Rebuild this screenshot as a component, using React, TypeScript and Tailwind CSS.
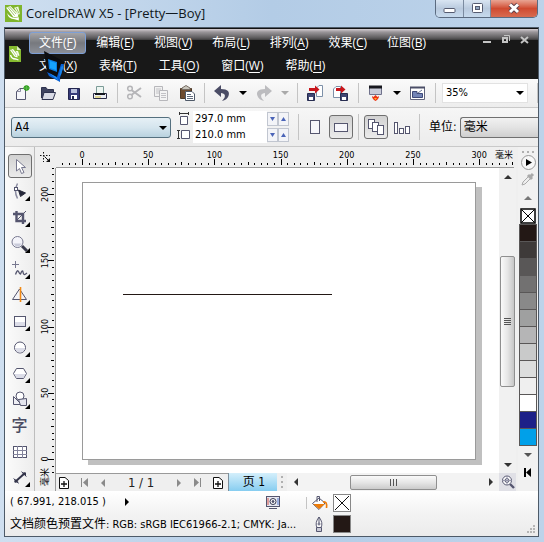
import type { ReactNode } from 'react';
import clsx from 'clsx';

const MENU_TOP = [
  ['文件', 'F'],
  ['编辑', 'E'],
  ['视图', 'V'],
  ['布局', 'L'],
  ['排列', 'A'],
  ['效果', 'C'],
  ['位图', 'B'],
];

const MENU_BOTTOM = [
  ['文本', 'X'],
  ['表格', 'T'],
  ['工具', 'O'],
  ['窗口', 'W'],
  ['帮助', 'H'],
];

const SWATCHES = [
  'bg-[#231815]',
  'bg-[#3e3a39]',
  'bg-[#595757]',
  'bg-[#727171]',
  'bg-[#898989]',
  'bg-[#9fa0a0]',
  'bg-[#b5b5b6]',
  'bg-[#c9caca]',
  'bg-[#dcdddd]',
  'bg-[#efefef]',
  'bg-white',
  'bg-[#1d2088]',
  'bg-[#00a0e9]',
];

// ruler scale: pixels per 5 mm
const STEP = 6.62;

function Icon({ size = 18, children }: { size?: number; children: ReactNode }) {
  return (
    <svg width={size} height={size} viewBox={`0 0 ${size} ${size}`} fill="none" stroke="#55566f" aria-hidden="true" className="block shrink-0">
      {children}
    </svg>
  );
}

function Arrow({ dir, className }: { dir: 'up' | 'down' | 'left' | 'right'; className?: string }) {
  const points = {
    up: '0,6 4,2 8,6',
    down: '0,2 8,2 4,6',
    left: '6,0 2,4 6,8',
    right: '2,0 6,4 2,8',
  }[dir];
  return (
    <svg width="8" height="8" viewBox="0 0 8 8" aria-hidden="true" className={clsx('block shrink-0', className)}>
      <polygon points={points} fill="currentColor" />
    </svg>
  );
}

function Logo() {
  return (
    <svg width="17" height="17" viewBox="0 0 16 16" aria-hidden="true" className="block shrink-0">
      <rect width="16" height="16" fill="#7fb52c" />
      <path d="M1 2.500 5 1 12 8 12.500 11 8 11.500Z" fill="#fff" />
      <path d="M2.500 2 9 10M4 1.500 10.500 8.500" stroke="#7fb52c" strokeWidth="0.700" />
      <path d="M8.500 2.500 12.500 1.500 14 8 13 9.500Z" fill="#f4fbe8" />
      <path d="M10.500 2.500 13.300 8" stroke="#7fb52c" strokeWidth="0.700" />
      <path d="M2 7.500Q3 13 9 13.500L13 14.500V11.500L9 12Q5 12 2 7.500Z" fill="#fff" />
    </svg>
  );
}

function DocumentLogo() {
  return (
    <svg width="12" height="16" viewBox="0 0 12 16" aria-hidden="true" className="block shrink-0">
      <path d="M0 0H8L12 4V16H0Z" fill="#86bb30" />
      <path d="M8 0V4H12Z" fill="#dcedc0" />
      <path d="M1 4 4 3 8.500 8.500V11.500L5.500 10.500Z" fill="#fff" />
      <path d="M2.500 3.500 7 10" stroke="#7fb52c" strokeWidth="0.600" />
      <path d="M6.500 5 9 5 10.500 9.500 9.500 10Z" fill="#f4fbe8" />
      <path d="M1.500 9Q2.500 13 6.500 13L9.500 14" stroke="#fff" strokeWidth="1.300" fill="none" />
    </svg>
  );
}

function Separator() {
  return <div className="mx-1 h-5 w-px shrink-0 bg-[#c4c4c4]" />;
}

function ToolButton({ label, children, narrow, disabled }: { label: string; children: ReactNode; narrow?: boolean; disabled?: boolean }) {
  return (
    <button aria-label={label} disabled={disabled} className={clsx('flex h-6 shrink-0 items-center justify-center', narrow ? 'w-4' : 'w-[26px]')}>
      {children}
    </button>
  );
}

function MenuItem({ text, hotkey, active }: { text: string; hotkey: string; active?: boolean }) {
  return (
    <button
      className={clsx(
        'h-[22px] shrink-0 rounded-[3px] border px-[9px] text-xs leading-5 whitespace-nowrap text-white',
        active ? 'border-[#7d9fd6] bg-linear-to-b from-[#a5a5a8] via-[#77797e] to-[#8b8f98]' : 'border-transparent',
      )}
    >
      {text}(<span className="underline underline-offset-2">{hotkey}</span>)
    </button>
  );
}

function TitleBar() {
  return (
    <header className="flex h-7 items-start justify-between">
      <div className="flex items-center gap-1 pt-1">
        <Logo />
        <h1 className="text-[13px] leading-[18px] whitespace-nowrap text-[#101820]">CorelDRAW X5 - [Pretty一Boy]</h1>
      </div>
      <div className="flex h-[18px] overflow-hidden rounded-b-[5px] border border-t-0 border-[#5b6b80]">
        <button aria-label="最小化" className="flex w-7 items-center justify-center border-r border-[#7b8ba0] bg-linear-to-b from-[#d9e5f2] via-[#b9cade] to-[#c7daed]">
          <svg width="13" height="15" viewBox="0 0 13 15">
            <rect x="1" y="7.500" width="11" height="4" rx="1" fill="#fff" stroke="#555b70" />
          </svg>
        </button>
        <button aria-label="最大化" className="flex w-[27px] items-center justify-center border-r border-[#7b8ba0] bg-linear-to-b from-[#d9e5f2] via-[#b9cade] to-[#c7daed]">
          <svg width="13" height="15" viewBox="0 0 13 15" stroke="#555b70">
            <rect x="1.500" y="2.500" width="10" height="9" rx="1" fill="#fff" />
            <rect x="4.500" y="5.500" width="4" height="3" fill="#91a6c0" />
          </svg>
        </button>
        <button aria-label="关闭" className="flex w-[46px] items-center justify-center bg-linear-to-b from-[#e8a493] via-[#cf4a30] to-[#d86b50]">
          <svg width="14" height="15" viewBox="0 0 14 15">
            <path d="M3 3.500 11 11M11 3.500 3 11" stroke="#60414a" strokeWidth="4.800" />
            <path d="M3 3.500 11 11M11 3.500 3 11" stroke="#fff" strokeWidth="3" />
          </svg>
        </button>
      </div>
    </header>
  );
}

function MenuBar() {
  return (
    <nav className="relative flex h-[51px] shrink-0 items-start bg-[#181818] bg-[linear-gradient(#111_0_1px,#d4cdd2_1px,#9a969a_4px,#5b595b_10px,#3b3a3b_12px,#181818_12px)]">
      <div className="flex w-6 shrink-0 justify-center pt-[18px] pr-1">
        <DocumentLogo />
      </div>
      <div className="flex flex-1 flex-col gap-px pt-1">
        <div className="flex">
          {MENU_TOP.map(([text, hotkey], i) => (
            <MenuItem key={hotkey} text={text} hotkey={hotkey} active={i === 0} />
          ))}
        </div>
        <div className="flex gap-[2px]">
          {MENU_BOTTOM.map(([text, hotkey]) => (
            <MenuItem key={hotkey} text={text} hotkey={hotkey} />
          ))}
        </div>
      </div>
      <div className="flex gap-2 pt-[6px] pr-2 text-[#c4c4c4]">
        <button aria-label="最小化文档">
          <svg width="11" height="12" viewBox="0 0 11 12" className="block">
            <path d="M2 8H10" stroke="currentColor" strokeWidth="2" />
          </svg>
        </button>
        <button aria-label="还原文档">
          <svg width="11" height="12" viewBox="0 0 11 12" fill="none" stroke="currentColor" className="block">
            <rect x="3" y="4" width="4" height="4" strokeWidth="2" />
            <path d="M4 1.500H9.500V7" />
          </svg>
        </button>
        <button aria-label="关闭文档">
          <svg width="11" height="12" viewBox="0 0 11 12" className="block">
            <path d="M2 3 9 9M9 3 2 9" stroke="currentColor" strokeWidth="2" />
          </svg>
        </button>
      </div>
      <svg width="24" height="32" viewBox="0 0 24 32" aria-hidden="true" className="pointer-events-none absolute top-[23px] left-[39px] z-10">
        <path d="M0 0 21 11 16 29 3 22Z" fill="#0d0e11" />
        <path d="M3 21 13 26 17 13 20 13 16 27 16 31 5 25Z" fill="#0a5fd2" />
        <path d="M5 22 12 26 15 30Z" fill="#1e96f5" />
        <path d="M17 16 20 14 17 24 15 25Z" fill="#1683ea" />
        <path d="M4 8 13 11 13 21 5 18Z" fill="#0a7fe6" />
        <path d="M6 10 12 12V19L6 17Z" fill="#16a4ff" />
      </svg>
    </nav>
  );
}

function StandardBar() {
  return (
    <div className="flex h-[29px] shrink-0 items-center border-b border-[#c9c9c9] bg-linear-to-b from-[#fafafa] to-[#ededed] pl-1">
      <ToolButton label="新建">
        <Icon>
          <path d="M3.500 15.500V7.500L7 4.500H12.500V15.500Z" fill="#f6f6fa" />
          <path d="M4 7.500H7.500V5" stroke="#8a8ba0" />
          <circle cx="13.500" cy="4" r="2.800" fill="#2f9e1c" stroke="none" />
          <path d="M10 4H17M13.500 1V7" stroke="#5cb84c" />
        </Icon>
      </ToolButton>
      <ToolButton label="打开">
        <Icon>
          <path d="M2.500 14V3.500H7L8.500 5.500H14.500V8" fill="#3f4461" stroke="#2e334f" />
          <path d="M3 15.500 5 8.500H16.500L14 15.500Z" fill="#d9dbe6" stroke="#2e334f" />
        </Icon>
      </ToolButton>
      <ToolButton label="保存">
        <Icon>
          <path d="M3.500 4.500H14.500V15.500H3.500Z" fill="#363a78" stroke="#23264f" />
          <rect x="6" y="5" width="6" height="4" fill="#b9bfdb" stroke="none" />
          <rect x="6" y="11" width="6" height="4" fill="#fff" stroke="none" />
          <rect x="7" y="12" width="2" height="3" fill="#23264f" stroke="none" />
        </Icon>
      </ToolButton>
      <ToolButton label="打印">
        <Icon>
          <path d="M5.500 10V2.500H12.500V10" fill="#eef6f2" stroke="#7c9c98" />
          <path d="M2.500 9.500H15.500V14.500H2.500Z" fill="#eceef4" stroke="#282a45" />
          <path d="M4 10H14" stroke="#15171f" strokeWidth="2" />
          <path d="M4 13H10" stroke="#d6c43c" />
        </Icon>
      </ToolButton>
      <Separator />
      <ToolButton label="剪切" disabled>
        <Icon>
          <path d="M4 5 15 13M4 12 15 4" stroke="#b5b5b8" strokeWidth="2" />
          <circle cx="4" cy="4.500" r="2.300" fill="#f3f3f3" stroke="#b5b5b8" strokeWidth="1.500" />
          <circle cx="4" cy="12.500" r="2.300" fill="#f3f3f3" stroke="#b5b5b8" strokeWidth="1.500" />
        </Icon>
      </ToolButton>
      <ToolButton label="复制" disabled>
        <Icon>
          <path d="M2.500 2.500H10.500V12.500H2.500Z" fill="#f1f1f1" stroke="#b7b7bb" />
          <path d="M4 5H9M4 7H7M4 9H7" stroke="#c2c2c6" />
          <path d="M7.500 6.500H15.500V16.500H7.500Z" fill="#f4f4f4" stroke="#b7b7bb" />
          <path d="M9 9.500H14M9 11.500H14M9 13.500H14" stroke="#c2c2c6" />
        </Icon>
      </ToolButton>
      <ToolButton label="粘贴">
        <Icon>
          <path d="M2.500 4.500H13.500V14.500H2.500Z" fill="#6d4a2d" stroke="#4d3826" />
          <path d="M4 5.500V4L8 1.500 12 4V5.500Z" fill="#c9c6bd" stroke="#766d64" />
          <path d="M7.500 7.500H14L16.500 10V16.500H7.500Z" fill="#fff" stroke="#4f5968" />
          <path d="M9 10.500H13M9 12.500H15M9 14.500H15" stroke="#606a7b" />
        </Icon>
      </ToolButton>
      <Separator />
      <ToolButton label="撤消">
        <Icon>
          <path d="M1 7 8 1V5C15 5 17 8 15.500 12Q14 16 9 17Q13 13 11.500 10.500Q10.500 9 8 9V13Z" fill="#4b4d66" stroke="none" />
        </Icon>
      </ToolButton>
      <ToolButton label="撤消列表" narrow>
        <Arrow dir="down" />
      </ToolButton>
      <ToolButton label="重做" disabled>
        <Icon>
          <path d="M17 7 10 1V5C3 5 1 8 2.500 12Q4 16 9 17Q5 13 6.500 10.500Q7.500 9 10 9V13Z" fill="#bcbcbf" stroke="none" />
        </Icon>
      </ToolButton>
      <ToolButton label="重做列表" narrow disabled>
        <Arrow dir="down" className="text-[#a9a9a9]" />
      </ToolButton>
      <Separator />
      <ToolButton label="导入">
        <Icon>
          <path d="M10.500 12.500V4L13 1.500H16.500V12.500Z" fill="#fff" stroke="#7d90a8" />
          <path d="M3 4H9V1.500L13.500 5.500 9 9.500V7H3Z" fill="#c8161c" stroke="none" />
          <path d="M1.500 9.500H8.500V16.500H1.500Z" fill="#3f4774" stroke="#272c50" />
          <rect x="3" y="13" width="4" height="3" fill="#fff" stroke="none" />
        </Icon>
      </ToolButton>
      <ToolButton label="导出">
        <Icon>
          <path d="M1.500 13.500V5L4 2.500H8.500V13.500Z" fill="#fff" stroke="#7d90a8" />
          <path d="M4 4H9V1.500L13.500 5.500 9 9.500V7H4Z" fill="#c8161c" stroke="none" />
          <path d="M8.500 9.500H15.500V16.500H8.500Z" fill="#3f4774" stroke="#272c50" />
          <rect x="10" y="13" width="4" height="3" fill="#fff" stroke="none" />
        </Icon>
      </ToolButton>
      <Separator />
      <ToolButton label="应用程序启动器">
        <Icon>
          <path d="M2.500 2.500H14.500V10.500H2.500Z" fill="#c9cbd8" stroke="#70728c" />
          <path d="M2 3H15" stroke="#17181e" strokeWidth="3" />
          <path d="M5 12Q5 15 8.500 17Q12 15 12 12L10.500 13 8.500 11 6.500 13Z" fill="#ee3212" stroke="none" />
          <path d="M7 14 8.500 16 10 14Z" fill="#ffb52e" stroke="none" />
        </Icon>
      </ToolButton>
      <ToolButton label="启动器列表" narrow>
        <Arrow dir="down" />
      </ToolButton>
      <ToolButton label="欢迎屏幕">
        <Icon>
          <path d="M1.500 3.500H15.500V15.500H1.500Z" fill="#fff" stroke="#62657d" />
          <path d="M1 3.500H16" stroke="#4b4e67" strokeWidth="2" />
          <path d="M3.500 7.500H8V9.500H13.500V13.500H3.500Z" fill="#7384b6" stroke="#3e4978" />
          <path d="M9 9 13 6" stroke="#6b7595" />
        </Icon>
      </ToolButton>
      <Separator />
      <div className="relative ml-[2px] h-5 w-[86px] shrink-0">
        <select aria-label="缩放级别" defaultValue="35" className="block h-5 w-full appearance-none border border-[#e2e2e2] bg-white pl-[3px] text-[11px] leading-4">
          <option value="35">35%</option>
        </select>
        <Arrow dir="down" className="pointer-events-none absolute top-[6px] right-1" />
      </div>
      <div className="ml-auto h-5 w-px bg-[#c4c4c4]" />
    </div>
  );
}

function SizeField({ label, value, icon }: { label: string; value: string; icon: ReactNode }) {
  return (
    <div className="flex h-4 items-center">
      {icon}
      <input aria-label={label} defaultValue={value} className="ml-[2px] h-4 w-[74px] bg-white pl-[2px] text-[11px] leading-4" />
      <button aria-label={`${label} -`} className="flex h-[14px] w-[11px] items-center justify-center border border-[#c1c6d0] bg-[#f3f4f8] text-[#4b64b8]">
        <svg width="5" height="4" viewBox="0 0 5 4">
          <path d="M0 0H5L2.500 4Z" fill="currentColor" />
        </svg>
      </button>
      <button aria-label={`${label} +`} className="flex h-[14px] w-[11px] items-center justify-center border border-[#c1c6d0] bg-[#f3f4f8] text-[#4b64b8]">
        <svg width="5" height="4" viewBox="0 0 5 4">
          <path d="M0 4H5L2.500 0Z" fill="currentColor" />
        </svg>
      </button>
    </div>
  );
}

const pressed = 'rounded-[3px] border border-[#6f6f6f] bg-linear-to-b from-[#d2d2d2] to-[#ebebeb]';

function PropertyBar() {
  return (
    <div className="flex h-[39px] shrink-0 items-center overflow-hidden border-b border-[#c9c9c9] bg-linear-to-b from-[#f6f6f6] to-[#ececec] pl-[6px]">
      <div className="relative h-[21px] w-[160px] shrink-0">
        <select aria-label="纸张类型" defaultValue="A4" className="block h-full w-full appearance-none rounded-[3px] border border-[#55707f] bg-linear-to-b from-[#e6f0f6] via-[#d5e5ee] to-[#b9d2df] pl-[3px] text-xs leading-4">
          <option>A4</option>
        </select>
        <Arrow dir="down" className="pointer-events-none absolute top-[7px] right-1" />
      </div>
      <div className="ml-[6px] flex shrink-0 flex-col">
        <SizeField
          label="宽度"
          value="297.0 mm"
          icon={
            <Icon size={14}>
              <path d="M3.500 4.500H10.500V12.500H3.500Z" fill="#fff" />
              <path d="M3 1.500H11M2.500 0V3M11.500 0V3" stroke="#333" />
            </Icon>
          }
        />
        <SizeField
          label="高度"
          value="210.0 mm"
          icon={
            <Icon size={14}>
              <path d="M4.500 2.500H12.500V10.500H4.500Z" fill="#fff" />
              <path d="M1.500 2V11M0 2.500H3M0 10.500H3" stroke="#333" />
            </Icon>
          }
        />
      </div>
      <div className="ml-[9px] h-[26px] w-px shrink-0 bg-[#c4c4c4]" />
      <button aria-label="纵向" className="ml-1 flex size-6 shrink-0 items-center justify-center">
        <Icon>
          <rect x="4.500" y="2.500" width="9" height="13" fill="#f6f6fa" />
        </Icon>
      </button>
      <button aria-label="横向" className={clsx('ml-[2px] flex size-6 shrink-0 items-center justify-center', pressed)}>
        <Icon>
          <rect x="2.500" y="5.500" width="13" height="8" fill="#f6f6fa" />
        </Icon>
      </button>
      <div className="ml-[5px] h-[26px] w-px shrink-0 bg-[#c4c4c4]" />
      <button aria-label="所有页面" className={clsx('ml-[5px] flex size-6 shrink-0 items-center justify-center', pressed)}>
        <Icon>
          <rect x="1.500" y="1.500" width="6" height="9" fill="#fff" />
          <rect x="5.500" y="4.500" width="6" height="9" fill="#fff" />
          <rect x="10.500" y="7.500" width="6" height="9" fill="#fff" />
        </Icon>
      </button>
      <button aria-label="当前页" className="ml-[2px] flex size-6 shrink-0 items-center justify-center">
        <Icon>
          <rect x="1.500" y="4.500" width="3" height="11" fill="#fff" />
          <rect x="6.500" y="10.500" width="4" height="5" fill="#fff" />
          <rect x="12.500" y="8.500" width="4" height="7" fill="#fff" />
        </Icon>
      </button>
      <div className="ml-[5px] h-[26px] w-px shrink-0 bg-[#c4c4c4]" />
      <label htmlFor="units" className="ml-[9px] shrink-0 text-xs whitespace-nowrap">
        单位:
      </label>
      <select id="units" className="ml-[3px] h-[21px] min-w-0 flex-1 appearance-none rounded-l-[3px] border border-r-0 border-[#707070] bg-linear-to-b from-[#f1f1f1] via-[#e3e3e3] to-[#cfcfcf] pl-[3px] text-xs leading-4">
        <option>毫米</option>
      </select>
    </div>
  );
}

const TOOLS: { label: string; flyout?: boolean; icon: ReactNode }[] = [
  {
    label: '挑选',
    icon: <path d="M5.500 2.500V14L8.500 11.500 10.500 16.500 13 15.500 10.500 10.500H14.500Z" fill="#fff" stroke="#77788f" />,
  },
  {
    label: '形状',
    flyout: true,
    icon: (
      <>
        <path d="M6.500 0.500Q2.500 8 6.500 15.500" stroke="#8a8ba0" strokeWidth="1.500" />
        <rect x="3.500" y="4.500" width="3" height="3" fill="#fff" />
        <path d="M7.500 7 14.500 10 9.500 13.500Z" fill="#26283a" stroke="#26283a" />
      </>
    ),
  },
  {
    label: '裁剪',
    flyout: true,
    icon: (
      <>
        <path d="M5.500 2V12H15M2 5H12V15" strokeWidth="2.400" />
        <path d="M5 12 15 2" />
      </>
    ),
  },
  {
    label: '缩放',
    flyout: true,
    icon: (
      <>
        <path d="M11 11 16 16" stroke="#3a3b4d" strokeWidth="3" />
        <circle cx="6.500" cy="7" r="5.500" fill="#f4f4fa" stroke="#77788f" />
        <path d="M2.500 8.500H10.500Q9 11.500 6.500 11.500T2.500 8.500Z" fill="#c9cbda" stroke="none" />
      </>
    ),
  },
  {
    label: '手绘',
    flyout: true,
    icon: (
      <>
        <path d="M4.500 0V7M1 3.500H8" stroke="#77788f" />
        <path d="M4.500 13.500Q6.500 8 7.500 10.500T9.500 13Q11.500 8 12 11T14 13.500L16 12" strokeWidth="1.300" />
      </>
    ),
  },
  {
    label: '智能填充',
    flyout: true,
    icon: (
      <>
        <path d="M1.500 12.500 8.500 2 15.500 12.500Z" fill="#f3f3f7" />
        <path d="M9.500 0V15" stroke="#f28a14" strokeWidth="1.600" />
      </>
    ),
  },
  {
    label: '矩形',
    flyout: true,
    icon: (
      <>
        <rect x="3.500" y="3.500" width="11" height="10" fill="#fff" />
        <rect x="4" y="9" width="10" height="4" fill="#dcdde8" stroke="none" />
      </>
    ),
  },
  {
    label: '椭圆形',
    flyout: true,
    icon: (
      <>
        <circle cx="9" cy="8.500" r="5.500" fill="#fff" />
        <path d="M4 9H14Q13 13.500 9 13.500T4 9Z" fill="#dcdde8" stroke="none" />
      </>
    ),
  },
  {
    label: '多边形',
    flyout: true,
    icon: (
      <>
        <path d="M2.500 8.500 5.500 3.500H12.500L15.500 8.500 12.500 13.500H5.500Z" fill="#fff" />
        <path d="M3.500 9H14.500L12.500 13H5.500Z" fill="#dcdde8" stroke="none" />
      </>
    ),
  },
  {
    label: '基本形状',
    flyout: true,
    icon: (
      <>
        <path d="M2.500 5.500V13.500H10.500Z" fill="#eeeef4" />
        <circle cx="9" cy="5" r="4" fill="#fff" />
        <path d="M7.500 8.500 15.500 7.500V14.500H9.500Z" fill="#e4e5ee" />
      </>
    ),
  },
  { label: '文本', icon: null },
  {
    label: '表格',
    icon: (
      <>
        <rect x="2.500" y="3.500" width="13" height="11" fill="#fff" />
        <path d="M6.500 3V15M11.500 3V15M2 7.500H16M2 11.500H16" stroke="#83849c" />
      </>
    ),
  },
  {
    label: '度量',
    flyout: true,
    icon: (
      <>
        <path d="M4 13 14 4" stroke="#33344a" strokeWidth="2" />
        <path d="M2.500 9.500 7.500 14.500M10.500 2.500 15.500 7.500" />
        <path d="M3.500 9.500V13.500H8ZM10.500 3.500H15V7.500Z" fill="#33344a" stroke="none" />
      </>
    ),
  },
];

function Toolbox() {
  return (
    <aside className="flex w-[30px] shrink-0 flex-col border-r border-[#bdbdbd] bg-linear-to-r from-[#fbfbfb] to-[#ededed] pt-[6px]">
      {TOOLS.map((tool, i) => (
        <button key={tool.label} aria-label={tool.label} className="relative flex h-[26px] w-[29px] items-center justify-center">
          <span className={clsx('flex size-6 items-center justify-center', i === 0 && pressed)}>
            {tool.icon ? <Icon>{tool.icon}</Icon> : <span className="text-base leading-5 font-medium text-[#4b4c62]">字</span>}
          </span>
          {tool.flyout && (
            <svg width="5" height="5" viewBox="0 0 5 5" className="absolute right-1 bottom-1">
              <path d="M5 0V5H0Z" fill="#000" />
            </svg>
          )}
        </button>
      ))}
    </aside>
  );
}

function tickLength(i: number) {
  if (i % 10 === 0) return 6;
  return i % 5 === 0 ? 3 : 2;
}

function HorizontalRuler() {
  const ticks = Array.from({ length: 69 }, (_, i) => i - 3);
  return (
    <div className="relative h-[21px] flex-1 overflow-hidden border-b border-[#9a9a9a]">
      <svg width="100%" height="20" className="block font-['DejaVu_Sans_Condensed','DejaVu_Sans',sans-serif]">
        {ticks.map((i) => (
          <rect key={i} x={Math.round(26 + i * STEP)} y={18 - tickLength(i)} width="1" height={tickLength(i)} />
        ))}
        {ticks
          .filter((i) => i % 10 === 0)
          .map((i) => (
            <text key={i} x={26 + i * STEP} y="11" fontSize="9" textAnchor="middle">
              {i * 5}
            </text>
          ))}
      </svg>
      <span className="absolute top-0 right-0 pr-px text-[9px] leading-4">毫米</span>
    </div>
  );
}

function VerticalRuler() {
  const ticks = Array.from({ length: 47 }, (_, i) => i - 2);
  return (
    <div className="w-[21px] shrink-0 overflow-hidden border-r border-[#9a9a9a]">
      <svg width="20" height="322" className="block font-['DejaVu_Sans_Condensed','DejaVu_Sans','Noto_Sans_CJK_SC',sans-serif]">
        {ticks.map((i) => (
          <rect key={i} x={19 - tickLength(i)} y={Math.round(291 - i * STEP)} width={tickLength(i)} height="1" />
        ))}
        {[0, 50, 100, 150, 200].map((n) => (
          <text key={n} x="13" y={291 - (n / 5) * STEP} fontSize="9" textAnchor="middle" transform={`rotate(-90 13 ${291 - (n / 5) * STEP})`}>
            {n}
          </text>
        ))}
        <text x="13" y="309" fontSize="9" textAnchor="middle" transform="rotate(-90 13 309)">
          毫米
        </text>
      </svg>
    </div>
  );
}

function PageNavigator() {
  return (
    <div className="flex h-[18px] shrink-0 items-center bg-[#efefef]">
      <div className="flex h-full w-[172px] shrink-0 items-center justify-between border-t border-[#9a9a9a] pr-1 pl-[2px] text-[#8a8a8a]">
        <button aria-label="在前面添加页">
          <AddPageIcon />
        </button>
        <button aria-label="第一页" className="flex">
          <FirstIcon />
        </button>
        <button aria-label="上一页">
          <Arrow dir="left" />
        </button>
        <span className="px-[10px] text-[13px] leading-4 whitespace-nowrap text-[#222]">1 / 1</span>
        <button aria-label="下一页">
          <Arrow dir="right" />
        </button>
        <button aria-label="最后一页" className="flex rotate-180">
          <FirstIcon />
        </button>
        <button aria-label="在后面添加页">
          <AddPageIcon />
        </button>
      </div>
      <button className="h-[18px] w-[49px] shrink-0 border-l border-[#7e8f9c] bg-linear-to-b from-[#d4effb] to-[#86cdf0] pl-[2px] text-xs leading-4">页 1</button>
      <div className="mx-1 flex shrink-0 flex-col gap-[3px]">
        {[0, 1, 2].map((i) => (
          <span key={i} className="size-[2px] bg-[#b0b0b0]" />
        ))}
      </div>
      <div className="flex h-full flex-1 items-center justify-between bg-[#f3f3f3] pr-1 pl-[5px]">
        <Arrow dir="left" className="text-[#333]" />
        <div className="flex h-[15px] w-[87px] items-center justify-center gap-[2px] rounded-[2px] border border-[#8f8f8f] bg-linear-to-b from-[#fafafa] via-[#e6e6e6] to-[#cbcbcb]">
          {[0, 1, 2].map((i) => (
            <span key={i} className="h-[7px] w-px bg-[#555]" />
          ))}
        </div>
        <Arrow dir="right" className="text-[#333]" />
      </div>
      <button aria-label="导航器" className="flex h-[18px] w-[17px] shrink-0 items-center justify-center bg-[#e0e0e6]">
        <Icon size={14}>
          <path d="M9 9 13 13" strokeWidth="2.400" />
          <circle cx="6" cy="5.500" r="4.500" fill="#fff" />
          <circle cx="6" cy="5.500" r="2" />
          <path d="M6 1V10M1.500 5.500H10.500" stroke="#9697ab" />
        </Icon>
      </button>
    </div>
  );
}

function AddPageIcon() {
  return (
    <svg width="12" height="14" viewBox="0 0 12 14" fill="none" stroke="#111" className="block">
      <path d="M1.500 1.500H7L10.500 4.500V12.500H1.500Z" fill="#fff" />
      <path d="M6 5V11M3 8H9" strokeWidth="1.300" />
    </svg>
  );
}

function FirstIcon() {
  return (
    <svg width="8" height="9" viewBox="0 0 8 9" fill="currentColor" className="block">
      <rect width="1" height="9" />
      <path d="M7 0V9L2 4.500Z" />
    </svg>
  );
}

function Canvas() {
  return (
    <main className="flex min-w-0 flex-1 flex-col bg-[#efefef]">
      <div className="flex">
        <div className="flex w-[21px] shrink-0 items-center justify-center">
          <svg width="14" height="14" viewBox="0 0 14 14" fill="none" stroke="#111">
            <path d="M4.500 1V11M1 4.500H11" strokeDasharray="1.500 1.500" />
            <path d="M5.500 5.500 10 10" />
            <path d="M11 7V11H7Z" fill="#111" stroke="none" />
          </svg>
        </div>
        <HorizontalRuler />
        <div className="w-1 shrink-0" />
      </div>
      <div className="flex flex-1">
        <VerticalRuler />
        <div className="flex min-w-0 flex-1 flex-col">
          <div className="flex flex-1">
            <div className="relative min-w-0 flex-1 overflow-hidden bg-white">
              <div className="absolute top-[14px] left-[26px] h-[278px] w-[394px] border border-[#9a9a9a] bg-white shadow-[6px_5px_0_#c0c0c0]">
                <div className="absolute top-[111px] left-[40px] h-px w-[209px] bg-[#231815]" />
              </div>
            </div>
            <div className="flex w-[17px] shrink-0 flex-col items-center justify-between bg-[#f1f1f1] pt-[5px] pb-1">
              <Arrow dir="up" className="text-[#333]" />
              <div className="flex h-[131px] w-[15px] flex-col items-center justify-center gap-px rounded-[2px] border border-[#8f8f8f] bg-linear-to-r from-[#fafafa] via-[#e6e6e6] to-[#c6c6c6]">
                {[0, 1, 2, 3].map((i) => (
                  <span key={i} className="h-px w-[7px] bg-[#555]" />
                ))}
              </div>
              <Arrow dir="down" className="text-[#333]" />
            </div>
          </div>
          <PageNavigator />
        </div>
        <div className="w-[2px] shrink-0" />
      </div>
    </main>
  );
}

function Palette() {
  return (
    <aside className="flex w-[20px] shrink-0 flex-col items-center bg-[#f1f1f1]">
      <div className="flex gap-[3px] pt-1 pb-[2px]">
        {[0, 1, 2].map((i) => (
          <span key={i} className="size-[2px] bg-[#b0b0b0]" />
        ))}
      </div>
      <button aria-label="调色板菜单" className="flex size-[15px] items-center justify-center rounded-full border border-[#999] bg-[#f7f7f7] pl-px">
        <svg width="6" height="7" viewBox="0 0 6 7">
          <path d="M0 0 6 3.500 0 7Z" />
        </svg>
      </button>
      <button aria-label="滴管" className="flex h-[18px] items-center">
        <Icon size={14}>
          <path d="M1 13 2 10 8 4 10 6 4 12Z" fill="#eee" stroke="#aaa" />
          <path d="M7 3 11 7M9 5 12 2" stroke="#aaa" strokeWidth="3" />
        </Icon>
      </button>
      <button aria-label="向上滚动" className="flex h-[19px] items-center">
        <Arrow dir="up" className="text-[#777]" />
      </button>
      <button aria-label="无填充" className="flex h-[17px] w-[18px] items-center justify-center">
        <svg width="16" height="16" viewBox="0 0 16 16" fill="#fff" stroke="#000">
          <rect x="1" y="1" width="14" height="14" strokeWidth="1.500" />
          <path d="M2 2 14 14M14 2 2 14" />
        </svg>
      </button>
      <div className="flex w-[18px] flex-col border-x border-b border-[#595757]">
        {SWATCHES.map((color) => (
          <button key={color} aria-label="色样" className={clsx('h-[17px] border-t border-[#595757]', color)} />
        ))}
      </div>
      <button aria-label="向下滚动" className="flex h-[18px] items-center">
        <Arrow dir="down" className="text-[#555]" />
      </button>
      <button aria-label="展开调色板" className="flex h-4 items-center">
        <svg width="8" height="9" viewBox="0 0 8 9">
          <rect width="2" height="9" />
          <path d="M7 0V9L2 4.500Z" />
        </svg>
      </button>
    </aside>
  );
}

function StatusBar() {
  return (
    <footer className="flex h-[45px] shrink-0 bg-linear-to-b from-white via-[#f3f3f3] to-[#ebebeb] pl-[5px]">
      <div className="flex w-[296px] shrink-0 flex-col justify-center gap-[2px] text-[11px] leading-5">
        <div className="flex items-center">
          <span className="w-[113px] whitespace-nowrap">( 67.991, 218.015 )</span>
          <Arrow dir="right" />
          <span className="ml-auto pr-[25px]">
            <Icon size={16}>
              <rect x="1.500" y="2.500" width="13" height="10" fill="#e6e7f0" />
              <path d="M3 4V11" stroke="#d85548" />
              <path d="M13 4V11" stroke="#5478cf" />
              <circle cx="8" cy="7.500" r="3" fill="#fff" stroke="#34364f" />
              <circle cx="8" cy="7.500" r="1" fill="#34364f" />
              <path d="M4 14.500H12" />
            </Icon>
          </span>
        </div>
        <div className="whitespace-nowrap">
          <span className="text-xs leading-5">文档颜色预置文件</span>: RGB: sRGB IEC61966-2.1; CMYK: Ja...
        </div>
      </div>
      <div className="flex flex-col gap-[3px] pt-[3px]">
        <div className="flex items-center gap-1">
          <div className="h-3 w-px bg-[#c4c4c4]" />
          <Icon>
            <path d="M1.500 9.500 8 4 14 9 8 15.500Z" fill="#fff" />
            <path d="M2 10H14L8 15Z" fill="#ed7d0b" stroke="none" />
            <path d="M6 8V2.500H8.500V7" />
            <path d="M12 8Q16.500 7 15.500 14" stroke="#ed7d0b" strokeWidth="1.600" />
          </Icon>
          <svg width="18" height="18" viewBox="0 0 18 18" fill="#fff" stroke="#888">
            <rect x="0.500" y="0.500" width="17" height="17" />
            <path d="M2 2 16 16M16 2 2 16" stroke="#111" />
          </svg>
        </div>
        <div className="flex items-center gap-1 pl-[5px]">
          <Icon>
            <path d="M8 2Q3.500 8 6 12.500H10Q12.500 8 8 2Z" fill="#fff" />
            <path d="M8 2V8" />
            <circle cx="8" cy="9" r="1" />
            <path d="M5.500 12.500H10.500V16.500H5.500Z" fill="#c9cad6" />
          </Icon>
          <div className="size-[18px] border border-[#888] bg-[#231815]" />
        </div>
      </div>
      <svg width="10" height="10" viewBox="0 0 10 10" fill="#b5b5b5" className="mr-[2px] mb-[2px] ml-auto self-end">
        <path d="M7 1h2v2h-2zM4 4h2v2h-2zM7 4h2v2h-2zM1 7h2v2h-2zM4 7h2v2h-2zM7 7h2v2h-2z" />
      </svg>
    </footer>
  );
}

export default function App() {
  return (
    <div className="flex min-h-screen flex-col overflow-hidden bg-linear-to-r from-[#cfdff0] via-[#b3cce6] to-[#bdd3ea] pr-[6px] pb-[6px] pl-[5px] font-['Open_Sans','Noto_Sans_CJK_SC',sans-serif] text-black">
      <TitleBar />
      <div className="flex flex-1 flex-col font-['DejaVu_Sans_Condensed','Noto_Sans_CJK_SC',sans-serif] outline outline-[#4d5a68]">
        <div className="font-['Open_Sans','Noto_Sans_CJK_SC',sans-serif]">
          <MenuBar />
        </div>
        <StandardBar />
        <PropertyBar />
        <div className="flex flex-1">
          <Toolbox />
          <Canvas />
          <Palette />
        </div>
        <StatusBar />
      </div>
    </div>
  );
}
